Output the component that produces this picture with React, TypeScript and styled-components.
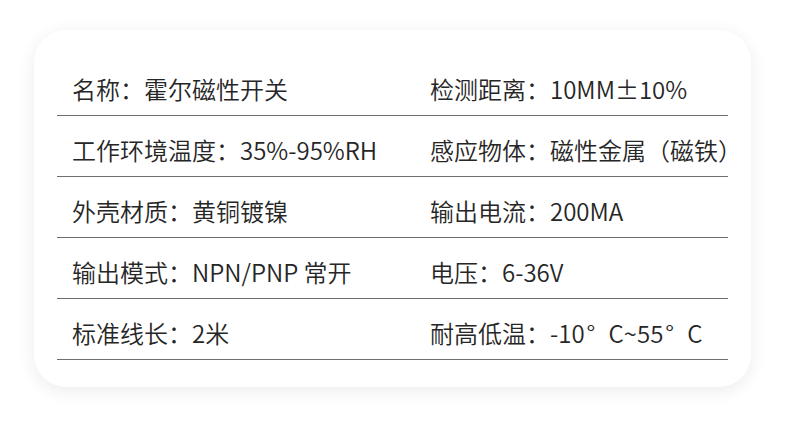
import styled, { createGlobalStyle } from "styled-components";

const GlobalStyle = createGlobalStyle`
  html, body {
    margin: 0;
    padding: 0;
    background: #ffffff;
  }
  body {
    font-family: "Noto Sans CJK SC", "Noto Sans", sans-serif;
  }
`;

const Page = styled.div`
  width: 790px;
  height: 437px;
  padding: 30px 0 0 34px;
  box-sizing: border-box;
  background: #ffffff;
`;

const Card = styled.div`
  width: 717px;
  height: 357px;
  box-sizing: border-box;
  padding: 25px 23px 0 23px;
  background: #ffffff;
  border-radius: 32px;
  box-shadow: 0 4px 18px rgba(0, 0, 0, 0.08);
`;

const Row = styled.div`
  display: grid;
  grid-template-columns: 358px 1fr;
  align-items: center;
  height: 61px;
  box-sizing: border-box;
  padding: 7px 0 0 15px;
  border-bottom: 1px solid #6f6f6f;
`;

const Cell = styled.div`
  font-size: 24px;
  font-weight: 350;
  line-height: 30px;
  color: #262626;
  white-space: nowrap;
`;

// full-width degree sign, as typed in the source artwork
const Degree = styled.span`
  display: inline-block;
  width: 1em;
  padding-left: 2px;
  box-sizing: border-box;
`;

const App = () => {
  return (
    <Page>
      <GlobalStyle />
      <Card>
        <Row>
          <Cell>名称：霍尔磁性开关</Cell>
          <Cell>检测距离：10MM±10%</Cell>
        </Row>
        <Row>
          <Cell>工作环境温度：35%-95%RH</Cell>
          <Cell>感应物体：磁性金属（磁铁）</Cell>
        </Row>
        <Row>
          <Cell>外壳材质：黄铜镀镍</Cell>
          <Cell>输出电流：200MA</Cell>
        </Row>
        <Row>
          <Cell>输出模式：NPN/PNP 常开</Cell>
          <Cell>电压：6-36V</Cell>
        </Row>
        <Row>
          <Cell>标准线长：2米</Cell>
          <Cell>
            耐高低温：-10<Degree>°</Degree>C~55<Degree>°</Degree>C
          </Cell>
        </Row>
      </Card>
    </Page>
  );
};

export default App;
